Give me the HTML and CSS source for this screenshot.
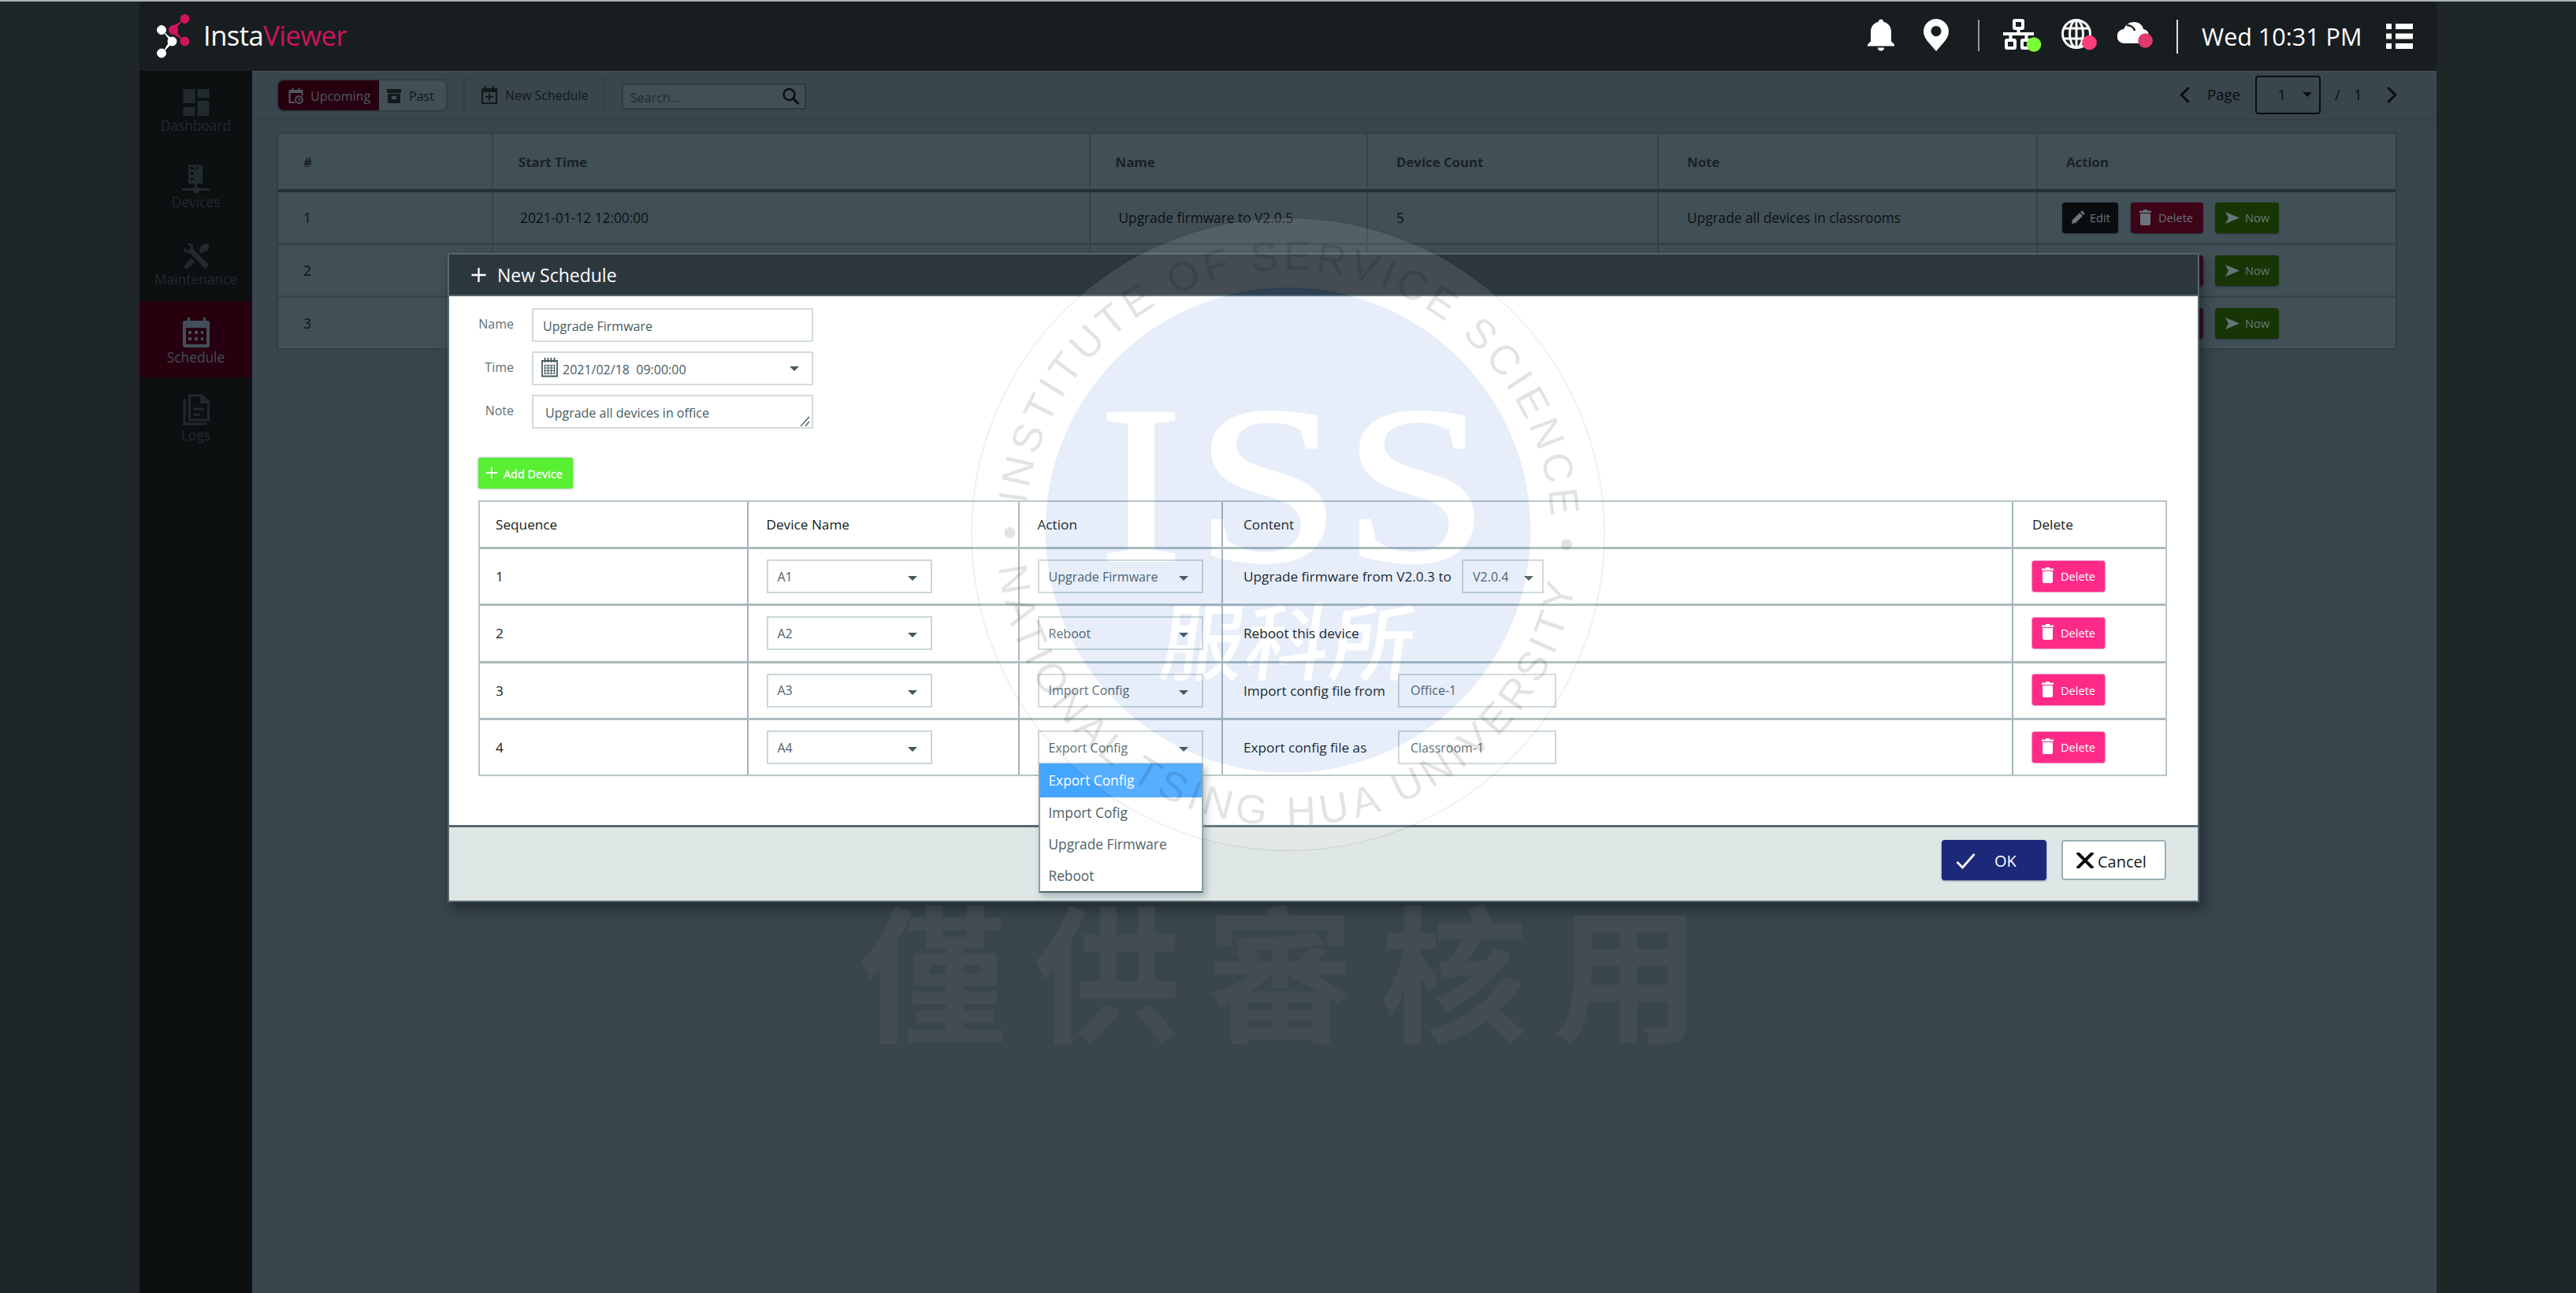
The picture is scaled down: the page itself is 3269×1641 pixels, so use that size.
FILE: index.html
```html
<!DOCTYPE html>
<html lang="en">
<head>
<meta charset="utf-8">
<title>InstaViewer</title>
<link rel="stylesheet" href="styles.css">
</head>
<body>
<svg class="sprite" width="0" height="0">
  <symbol id="trash" viewBox="0 0 15 20"><path d="M5 0h5v1.500h5v2.500H0V1.500h5zM1 5h13v13a2 2 0 0 1-2 2H3a2 2 0 0 1-2-2z"/></symbol>
  <symbol id="pencil" viewBox="0 0 16 16"><path d="M0 16l1-5L10 2l4 4-9 9zM11 1l1-1h2l2 2v2l-1 1z"/></symbol>
  <symbol id="send" viewBox="0 0 18 15"><path d="M0 0l18 7.500L0 15l4-7.500z"/></symbol>
  <symbol id="caret" viewBox="0 0 12 6"><path d="M0 0h12L6 6z"/></symbol>
  <symbol id="plus" viewBox="0 0 20 20"><path d="M10 1v18M1 10h18" fill="none" stroke="currentColor" stroke-width="2.300"/></symbol>
</svg>

<div class="app">
  <header class="topbar">
    <svg class="logo" viewBox="0 0 42 56">
      <g fill="#d0145c" stroke="#d0145c"><circle cx="35.500" cy="6" r="5.500"/><circle cx="21" cy="20" r="5.500"/><circle cx="35.500" cy="34.500" r="5.500"/><path d="M32 9l-6 6-2 5 3 6 6 6-12-7V15z" stroke-width="1"/></g>
      <g fill="#fff" stroke="#fff"><circle cx="6" cy="20" r="5.500"/><circle cx="19.500" cy="34.500" r="5.500"/><circle cx="6" cy="49.500" r="5.500"/><path d="M9 23l8 7 3 5-4 5-7 7 4-7 4-6-4-6z" stroke-width="1"/></g>
    </svg>
    <div class="brand">Insta<span>Viewer</span></div>
    <div class="status">
      <svg class="bell" viewBox="0 0 34 40"><path d="M17 0c2 0 3 1 3 3 6 1.500 10 6 10 13v12l4 4v2H0v-2l4-4V16C4 9 8 4.500 14 3c0-2 1-3 3-3zM13 36h8a4 4 0 0 1-8 0z"/></svg>
      <svg class="pin" viewBox="0 0 32 41"><path fill-rule="evenodd" d="M16 0a16 16 0 0 1 16 16c0 9-8 15-16 25C8 31 0 25 0 16A16 16 0 0 1 16 0zm0 9a6.500 6.500 0 1 0 .01 0z"/></svg>
      <i class="bar"></i>
      <svg class="net" viewBox="0 0 50 43"><g fill="none" stroke="#fff" stroke-width="4"><rect x="14" y="2" width="11" height="10" rx="1"/><rect x="4" y="27" width="11" height="10" rx="1"/><rect x="24" y="27" width="11" height="10" rx="1"/><path d="M0 19h39M19.500 12v7M9.500 19v8M29.500 19v8"/></g><circle cx="39" cy="32.500" r="9.300" fill="#7bff33"/></svg>
      <svg class="globe" viewBox="0 0 46 41"><g fill="none" stroke="#fff" stroke-width="3"><circle cx="19" cy="19" r="17.500"/><ellipse cx="19" cy="19" rx="8.500" ry="17.500"/><path d="M19 1v36M3 12h32M2 25h34"/></g><circle cx="35.500" cy="30" r="9.300" fill="#ff3f78"/></svg>
      <svg class="cloud" viewBox="0 0 46 35"><path d="M9 28a9 9 0 0 1-1-18C11 4 15 1 21 1c7 0 11 4 12 9 5 1 7 4 7 9 0 6-3 9-8 9z"/><path d="M12 5c5 0 9 3 10 7" fill="none" stroke="#181d20" stroke-width="2.500"/><circle cx="35.500" cy="24.500" r="9.300" fill="#e13a6e"/></svg>
      <i class="bar bar2"></i>
      <span class="clock">Wed 10:31 PM</span>
      <svg class="menu" viewBox="0 0 34 32"><path d="M0 0h7v7H0zM12 0h22v7H12zM0 12.500h7v7H0zM12 12.500h22v7H12zM0 25h7v7H0zM12 25h22v7H12z"/></svg>
    </div>
  </header>

  <div class="body">
    <nav class="sidebar">
      <a class="item"><svg viewBox="0 0 36 40"><path d="M1.500 3h15v18h-15zM19.500 3h15v11h-15zM1.500 26h15v11h-15zM19.500 18h15v19h-15z"/></svg>Dashboard</a>
      <a class="item"><svg viewBox="0 0 36 40"><path fill-rule="evenodd" d="M9 2h16a1 1 0 0 1 1 1v23h-7v5h3l1 1h12v3H23l-3 3h-4l-2-3H0v-3h13l3-1v-5H8V3zM11 5v3h4V5zM18 5v3h2V5zM11 12v3h4v-3zM11 19v3h4v-3z"/></svg>Devices</a>
      <a class="item"><svg viewBox="0 0 36 40"><path d="M6 4c6-2 9 2 8 7l20 20-5 5L10 16c-5 1-9-2-8-7l4 4 4-1 1-4zM2 33l10-10 4 4L6 37zM22 14c0-6 4-10 11-10 3 4 1 9-4 10l-5 3z"/></svg>Maintenance</a>
      <a class="item active"><svg viewBox="0 0 36 40"><path fill-rule="evenodd" d="M7 1h3v4h17V1h3v4h2a3 3 0 0 1 3 3v28a3 3 0 0 1-3 3H4a3 3 0 0 1-3-3V8a3 3 0 0 1 3-3h3zM5 14v21h26V14zM8 18h4v4H8zm8 0h4v4h-4zm8 0h3v4h-3zM8 26h4v4H8zm8 0h4v4h-4zm8 0h3v4h-3z"/></svg>Schedule</a>
      <a class="item logs"><svg viewBox="0 0 36 42"><g fill="none" stroke="currentColor" stroke-width="3"><path d="M9.500 3h16l8 8v23h-24zM3 7v32h28M14 20h14M14 27h9"/></g><path d="M23 3l11 10h-11z"/></svg>Logs</a>
    </nav>

    <main class="content">
      <div class="toolbar">
        <div class="seg">
          <span class="on"><svg viewBox="0 0 18 20"><path fill="none" stroke="currentColor" stroke-width="2" d="M17 9V3H1v15h7M5 0v4M13 0v4M1 5h16"/><circle cx="13" cy="14.500" r="4.500" fill="none" stroke="currentColor" stroke-width="1.800"/><path fill="none" stroke="currentColor" stroke-width="1.500" d="M13 12v3h2"/></svg>Upcoming</span>
          <span class="off"><svg viewBox="0 0 18 18"><path fill-rule="evenodd" d="M0 0h18v5H0zM1 6h16v12H1zM6 9v4h6V9z"/></svg>Past</span>
        </div>
        <i class="sep"></i>
        <span class="new"><svg viewBox="0 0 22 24"><path fill="none" stroke="currentColor" stroke-width="2.200" d="M2 4h18v18H2zM6 0v5M16 0v5M6 14h10M11 9.500v9"/><path d="M2 3h18v5H2z"/></svg>New Schedule</span>
        <i class="sep sep2"></i>
        <div class="search">Search...<svg viewBox="0 0 22 22"><g fill="none" stroke="currentColor"><circle cx="9" cy="9" r="7" stroke-width="2.500"/><path d="M14 14l7 7" stroke-width="3"/></g></svg></div>
        <div class="pager">
          <svg class="chev" viewBox="0 0 15 24"><path d="M13 2L3 12l10 10" fill="none" stroke="currentColor" stroke-width="3"/></svg>
          <span class="pg">Page</span>
          <span class="pgsel">1<svg class="caret"><use href="#caret"/></svg></span>
          <span class="slash">/</span><span class="total">1</span>
          <svg class="chev" viewBox="0 0 15 24"><path d="M2 2l10 10L2 22" fill="none" stroke="currentColor" stroke-width="3"/></svg>
        </div>
      </div>

      <section class="jobs">
        <div class="jrow jhead"><div>#</div><div>Start Time</div><div>Name</div><div>Device Count</div><div>Note</div><div>Action</div></div>
        <div class="jrow"><div>1</div><div>2021-01-12 12:00:00</div><div>Upgrade firmware to V2.0.5</div><div>5</div><div>Upgrade all devices in classrooms</div><div class="acts"><b class="edit"><svg><use href="#pencil"/></svg>Edit</b><b class="del"><svg><use href="#trash"/></svg>Delete</b><b class="now"><svg><use href="#send"/></svg>Now</b></div></div>
        <div class="jrow"><div>2</div><div></div><div></div><div></div><div></div><div class="acts"><b class="edit"></b><b class="del"></b><b class="now"><svg><use href="#send"/></svg>Now</b></div></div>
        <div class="jrow"><div>3</div><div></div><div></div><div></div><div></div><div class="acts"><b class="edit"></b><b class="del"></b><b class="now"><svg><use href="#send"/></svg>Now</b></div></div>
      </section>
    </main>
  </div>
</div>

<div class="modal">
  <div class="mhead"><svg><use href="#plus"/></svg>New Schedule</div>
  <div class="mbody">
    <div class="field"><label>Name</label><div class="input">Upgrade Firmware</div></div>
    <div class="field"><label>Time</label><div class="input date"><svg class="cal" viewBox="0 0 21 25"><path fill="none" stroke="currentColor" stroke-width="1.800" d="M1 4h19v19.500H1zM4.500 0v6M8.500 0v6M12.500 0v6M16.500 0v6"/><path fill="none" stroke="currentColor" stroke-width="1.100" d="M3.500 9.500h14M3.500 13h14M3.500 16.500h14M3.500 20h14M4.500 9v12M8.500 9v12M12.500 9v12M16.500 9v12"/></svg>2021/02/18&nbsp; 09:00:00<svg class="caret"><use href="#caret"/></svg></div></div>
    <div class="field"><label>Note</label><div class="input note">Upgrade all devices in office<svg class="grip" viewBox="0 0 13 13"><path d="M1 13L12 1M7 13l5-6" stroke="currentColor" stroke-width="1.300"/></svg></div></div>

    <div class="add"><svg><use href="#plus"/></svg>Add Device</div>

    <div class="devs">
      <div class="drow dhead"><div>Sequence</div><div>Device Name</div><div>Action</div><div>Content</div><div>Delete</div></div>
      <div class="drow"><div>1</div><div><span class="sel">A1<svg class="caret"><use href="#caret"/></svg></span></div><div><span class="sel">Upgrade Firmware<svg class="caret"><use href="#caret"/></svg></span></div><div><em>Upgrade firmware from V2.0.3 to</em><span class="sel ver">V2.0.4<svg class="caret"><use href="#caret"/></svg></span></div><div><b class="rm"><svg><use href="#trash"/></svg>Delete</b></div></div>
      <div class="drow"><div>2</div><div><span class="sel">A2<svg class="caret"><use href="#caret"/></svg></span></div><div><span class="sel">Reboot<svg class="caret"><use href="#caret"/></svg></span></div><div><em>Reboot this device</em></div><div><b class="rm"><svg><use href="#trash"/></svg>Delete</b></div></div>
      <div class="drow"><div>3</div><div><span class="sel">A3<svg class="caret"><use href="#caret"/></svg></span></div><div><span class="sel">Import Config<svg class="caret"><use href="#caret"/></svg></span></div><div><em class="short">Import config file from</em><span class="sel file">Office-1</span></div><div><b class="rm"><svg><use href="#trash"/></svg>Delete</b></div></div>
      <div class="drow"><div>4</div><div><span class="sel">A4<svg class="caret"><use href="#caret"/></svg></span></div><div><span class="sel">Export Config<svg class="caret"><use href="#caret"/></svg><span class="menu-list"><span class="hot">Export Config</span><span>Import Cofig</span><span>Upgrade Firmware</span><span>Reboot</span></span></span></div><div><em class="short">Export config file as</em><span class="sel file">Classroom-1</span></div><div><b class="rm"><svg><use href="#trash"/></svg>Delete</b></div></div>
    </div>
  </div>
  <div class="mfoot">
    <div class="btn ok"><svg viewBox="0 0 24 20"><path d="M1 11l7 7L23 1" fill="none" stroke="currentColor" stroke-width="2.800"/></svg>OK</div>
    <div class="btn cancel"><svg viewBox="0 0 22 20"><path d="M1 0l20 20M21 0L1 20" fill="none" stroke="currentColor" stroke-width="4"/></svg>Cancel</div>
  </div>
</div>

<svg class="seal" viewBox="1000 250 1300 1150">
  <defs>
    <path id="arc-top" d="M1302.700 640A334 334 0 0 1 1968.500 664"/>
    <path id="arc-bottom" d="M1267.300 719.200A370 370 0 0 0 2000.400 735.900"/>
    <mask id="cut" maskUnits="userSpaceOnUse" x="1300" y="340" width="670" height="670">
      <circle cx="1634.500" cy="673" r="308" fill="#fff"/>
      <g fill="#000" stroke="#000" stroke-width="4" font-family="Liberation Serif, serif" font-size="284">
        <text x="1396" y="711" textLength="104" lengthAdjust="spacingAndGlyphs">I</text>
        <text x="1517" y="711" textLength="184" lengthAdjust="spacingAndGlyphs">S</text>
        <text x="1705" y="711" textLength="184" lengthAdjust="spacingAndGlyphs">S</text>
      </g>
      <text transform="translate(1468 855) skewX(-8)" fill="#000" font-family="Noto Sans CJK TC, sans-serif" font-weight="500" font-size="106" letter-spacing="2">服科所</text>
    </mask>
  </defs>
  <circle cx="1634.500" cy="678" r="401.500" fill="none" stroke="#000" stroke-opacity=".06" stroke-width="2"/>
  <path fill="#fff" fill-opacity=".1" fill-rule="evenodd" d="M1233 678a401.500 401.500 0 0 1 803 0a401.500 401.500 0 0 1-803 0zM1326.500 673a308 308 0 0 0 616 0a308 308 0 0 0-616 0z"/>
  <circle cx="1634.500" cy="673" r="308" fill="#3771d5" fill-opacity=".12" mask="url(#cut)"/>
  <g fill="#000" fill-opacity=".11" font-family="Liberation Sans, Arial, sans-serif" font-size="52">
    <text textLength="992"><textPath href="#arc-top" textLength="992">INSTITUTE OF SERVICE SCIENCE</textPath></text>
    <text textLength="1055"><textPath href="#arc-bottom" textLength="1055">NATIONAL TSING HUA UNIVERSITY</textPath></text>
    <circle cx="1281.500" cy="676" r="7"/><circle cx="1988" cy="691" r="7"/>
  </g>
  <text x="1091" y="1309" fill="#646464" fill-opacity=".22" font-family="Noto Sans CJK TC, sans-serif" font-weight="700" font-size="187" letter-spacing="33">僅供審核用</text>
</svg>
</body>
</html>
```
FILE: styles.css
```css
* { box-sizing: border-box; }
body {
  margin: 0;
  position: relative;
  width: 3269px;
  height: 1641px;
  overflow: hidden;
  background: #1e2628;
  border-top: 2px solid #a9b3b5;
  font-family: "Open Sans", "Noto Sans", sans-serif;
  font-size: 16px;
}
svg { display: block; fill: currentColor; flex: none; }
.sprite { position: absolute; }
.app { width: 2915px; height: 1639px; margin-left: 177px; display: flex; flex-direction: column; }

/* top bar */
.topbar { height: 88px; background: #181d20; display: flex; align-items: flex-start; color: #fff; }
.logo { width: 42px; height: 56px; margin: 16px 0 0 22px; }
.brand { font-size: 34.5px; line-height: 40px; margin: 23px 0 0 17px; letter-spacing: -.5px; }
.brand span { color: #d0145c; }
.status { display: flex; align-items: flex-start; margin: 22px 30px 0 auto; }
.bell { width: 34px; height: 41px; }
.pin { width: 32px; height: 41px; margin-left: 37px; }
.bar { width: 2px; height: 40px; background: #909a9e; margin: 1px 0 0 37px; }
.net { width: 50px; height: 43px; margin-left: 30px; }
.globe { width: 46px; height: 41px; margin-left: 24px; }
.cloud { width: 46px; height: 35px; margin: 3px 0 0 25px; }
.bar2 { height: 43px; background: #dde2e3; margin-left: 29px; }
.clock { font-size: 30.5px; line-height: 42px; margin: 1px 0 0 30px; width: 203px; white-space: nowrap; }
.menu { width: 34px; height: 32px; margin: 6px 0 0 31px; }

.body { flex: 1; display: flex; }

/* side navigation */
.sidebar { width: 143px; background: #0c1011; color: #202a2f; }
.item { display: flex; flex-direction: column; align-items: center; height: 97.3px; padding-top: 20px; font-size: 17.3px; line-height: 24px; }
.item svg { width: 36px; height: 40px; margin-bottom: -2px; }
.item.active { background: #26000f; color: #435059; }
.item.active svg { margin-bottom: 0; }
.item.logs svg { height: 42px; margin-bottom: 0; }

/* list page */
.content { flex: 1; background: #39464d; border-top: 2px solid #414f56; }
.toolbar { height: 61px; border-bottom: 2px solid #343f46; display: flex; align-items: flex-start; padding-left: 31px; color: #14191b; line-height: 24px; }
.seg { display: flex; width: 217px; height: 42px; margin-top: 8px; border: 2px solid #313d43; border-radius: 9px; overflow: hidden; background: #414f56; }
.seg span { display: flex; align-items: center; padding-top: 2px; }
.seg .on { width: 128px; background: #26000f; color: #535961; padding-left: 13px; gap: 9px; }
.seg .on svg { width: 19px; height: 20px; }
.seg .off { padding-left: 10px; gap: 10px; }
.seg .off svg { width: 18px; height: 18px; }
.sep { width: 2px; height: 44px; background: #333e45; margin: 6px 0 0 20px; }
.new { display: flex; align-items: center; gap: 9px; height: 48px; margin: 5px 0 0 20px; width: 136px; white-space: nowrap; }
.new svg { width: 22px; height: 24px; }
.search { width: 234px; height: 33px; margin: 14px 0 0 21px; border: 2px solid #2f3a40; background: #414f56; color: #222b30; display: flex; align-items: center; justify-content: space-between; padding: 2px 6px 0 9px; }
.search svg { width: 23px; height: 22px; color: #0b0e10; margin-top: -3px; }
.pager { display: flex; align-items: center; height: 56px; margin: 0 49px 0 auto; font-size: 18.5px; color: #0a0d0f; }
.chev { width: 15px; height: 23px; }
.pg { margin-left: 21px; width: 44px; font-size: 18.5px; }
.pgsel { width: 83px; height: 49px; border: 2px solid #0a0d0f; border-radius: 4px; margin-left: 17px; display: flex; align-items: center; justify-content: flex-end; padding-right: 9px; gap: 21px; }
.caret { width: 12px; height: 6px; }
.slash { margin-left: 18px; width: 24px; }
.total { width: 41px; }

.jobs { margin: 15px 0 0 31px; width: 2691px; border: 2px solid #333e45; background: #414f56; font-size: 17.3px; color: #0d1214; }
.jrow { display: grid; grid-template-columns: 271px 757.5px 352.5px 369px 481px 1fr; height: 67px; border-top: 3px solid #37434a; }
.jrow > div { display: flex; align-items: center; padding-left: 36px; border-left: 2px solid #36424a; white-space: nowrap; }
.jrow > div:first-child { border-left: 0; padding-left: 32px; }
.jrow > div:nth-child(2) { padding-left: 34px; }
.jrow > div:nth-child(6) { padding-left: 31px; }
.jhead { height: 70px; border-top: 0; color: #1a2226; font-weight: 700; font-size: 16.8px; }
.jhead > div:nth-child(2), .jhead > div:nth-child(3) { padding-left: 32px; }
.jhead > div:nth-child(6) { padding-left: 36px; }
.jhead + .jrow { border-top: 4px solid #262f34; height: 68px; }
.acts b { height: 39px; border-radius: 4px; display: flex; align-items: center; font-weight: 400; font-size: 14.6px; color: #69757b; box-shadow: 0 1px 2px #2b363c; }
.edit { width: 71px; background: #0a0d0f; padding-left: 12px; gap: 7px; }
.edit svg { width: 16px; height: 16px; }
.del { width: 92px; background: #3d0317; margin-left: 16px; padding-left: 11px; gap: 9px; }
.del svg { width: 15px; height: 20px; }
.now { width: 81px; background: #183605; margin-left: 15px; padding-left: 13px; gap: 7px; }
.now svg { width: 18px; height: 15px; }

/* dialog */
.modal { position: absolute; left: 568px; top: 319px; width: 2223px; height: 824px; border: 2px solid #546870; display: flex; flex-direction: column; background: #fff; box-shadow: 5px 9px 14px rgba(20, 28, 32, .6); }
.mhead { height: 53px; background: #2d383e; border-bottom: 2px solid #546870; color: #fff; font-size: 23px; display: flex; align-items: center; gap: 13px; padding-left: 27px; }
.mhead svg { width: 21px; height: 20px; }
.mbody { flex: 1; padding: 15px 0 0 37px; color: #141c20; }
.field { display: flex; height: 43px; margin-bottom: 12px; color: #5c7177; }
.field label { width: 45px; text-align: right; line-height: 40px; white-space: nowrap; margin-right: 23px; }
.input { width: 357px; border: 2px solid #d3dcdc; display: flex; align-items: center; padding: 2px 0 0 12px; color: #475b62; }
.date { padding-left: 10px; }
.cal { width: 21px; height: 25px; margin: -4px 6px 0 0; }
.date .caret { margin: -1px 16px 0 auto; }
.note { padding-left: 15px; }
.grip { width: 13px; height: 13px; margin: auto 2px 1px auto; }
.add { width: 120px; height: 39px; margin: 37px 0 15px; background: #59ef32; border-radius: 3px; box-shadow: 0 0 2px 1px #b7c9c4; color: #fff; font-size: 14.4px; display: flex; align-items: center; gap: 7px; padding: 2px 0 0 9px; white-space: nowrap; -webkit-text-stroke: .3px #fff; }
.add svg { width: 16px; height: 16px; margin-top: -3px; }
.devs { width: 2143px; border: 2px solid #b6c5c7; font-size: 17.2px; }
.drow { display: grid; grid-template-columns: 339px 344px 258px 1003px 1fr; height: 72.3px; border-top: 3px solid #abbabd; }
.dhead { height: 57px; border-top: 0; }
.drow > div { display: flex; align-items: center; padding-left: 22.5px; border-left: 2px solid #a3b4b8; }
.drow > div:first-child { border-left: 0; padding-left: 20px; }
.drow > div:nth-child(4) { padding-left: 26px; }
.drow > div:nth-child(5) { padding-left: 24px; }
.sel { position: relative; width: 210px; height: 43px; border: 2px solid #cbd7d8; display: flex; align-items: center; padding-left: 12px; font-size: 16px; color: #4e6269; }
.sel .caret { margin: 5px 17px 0 auto; color: #44585f; }
.drow em { font-style: normal; width: 277px; white-space: nowrap; }
.drow em.short { width: 196px; }
.ver { width: 104px; }
.ver .caret { margin-right: 11px; }
.file { width: 201px; padding-left: 14px; }
.rm { width: 92px; height: 39px; background: #ff2a88; border-radius: 3px; box-shadow: 0 0 1px 1px #e79cc4; color: #fff; font-size: 14.6px; font-weight: 400; display: flex; align-items: center; gap: 9px; padding-left: 12px; margin-top: -1px; }
.rm svg { width: 15px; height: 20px; margin-top: -2px; }
.menu-list { position: absolute; left: -1px; top: 40px; width: 209px; height: 164px; z-index: 2; background: #fff; border: 2px solid #8ba0a6; border-bottom-color: #546870; border-top: 0; box-shadow: 3px 4px 9px rgba(90, 120, 130, .5); display: flex; flex-direction: column; font-size: 17.3px; }
.menu-list span { height: 40px; display: flex; align-items: center; padding-left: 11px; white-space: nowrap; }
.menu-list .hot { height: 43px; background: #42a5ff; color: #fff; }
.mfoot { height: 96px; background: #dfe7e6; border-top: 3px solid #546870; display: flex; justify-content: flex-end; align-items: flex-start; gap: 19px; padding: 16px 40px 0 0; font-size: 20px; }
.btn { height: 51px; border-radius: 4px; display: flex; align-items: center; padding-top: 2px; }
.ok { width: 133px; background: #1c2878; color: #fff; padding-left: 18px; gap: 24px; box-shadow: 0 1px 2px #5c6b90; }
.ok svg { width: 25px; height: 20px; }
.cancel { width: 133px; background: #fff; border: 2px solid #9bafb3; color: #141c20; padding: 4px 0 0 17px; gap: 5px; }
.cancel svg { width: 22px; height: 20px; color: #05090a; margin-top: -4px; }

/* seal printed over the whole page */
.seal { position: absolute; left: 1000px; top: 248px; width: 1300px; height: 1150px; pointer-events: none; z-index: 3; }
```
